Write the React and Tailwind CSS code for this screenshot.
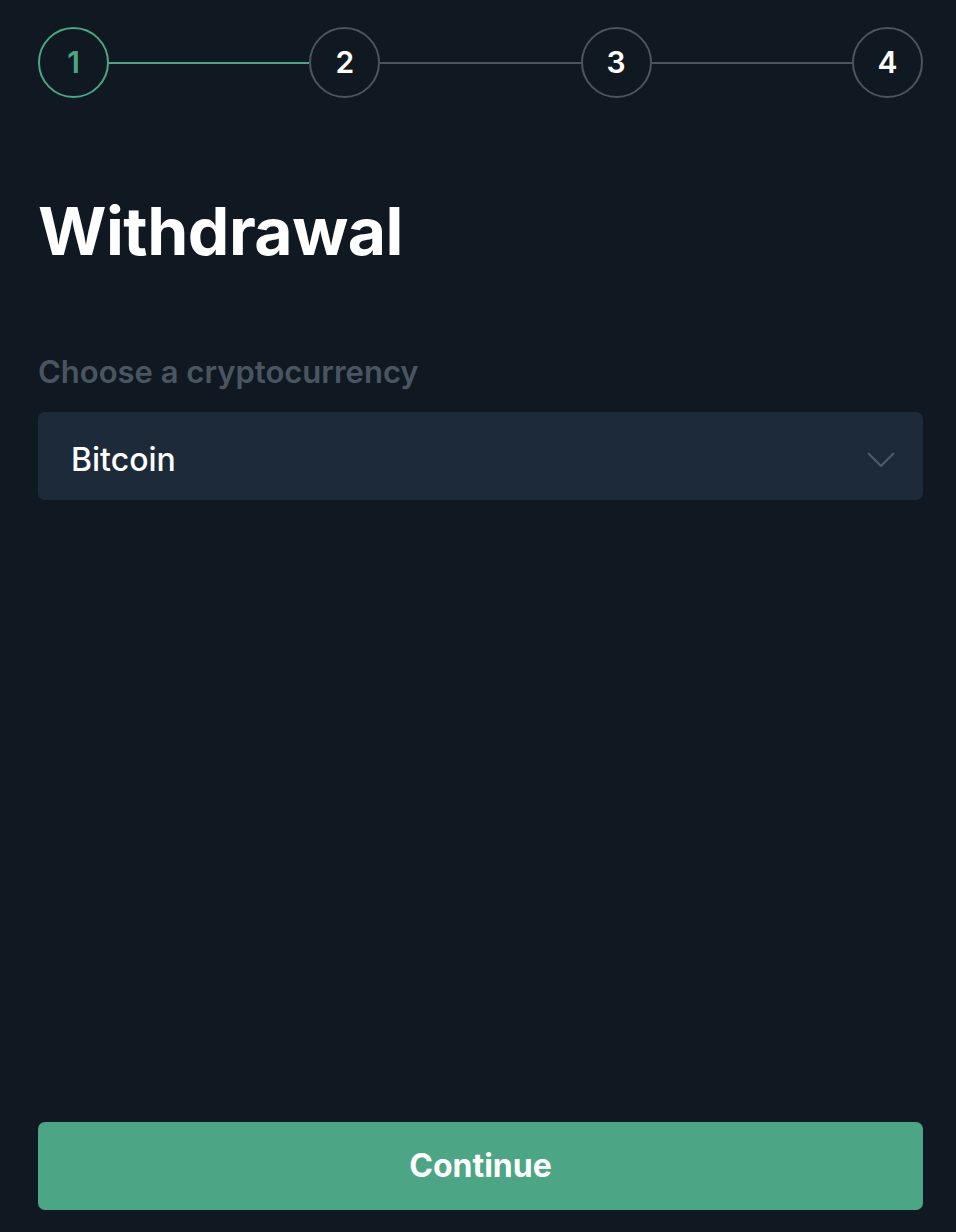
import React from "react";

function Step({ n, active }) {
  return (
    <div
      className={`flex h-[71px] w-[71px] shrink-0 items-center justify-center rounded-full border-[2px] text-[30px] font-semibold ${
        active ? "border-[#4ca584] text-[#4ca584]" : "border-[#4b5560] text-white"
      }`}
    >
      {n}
    </div>
  );
}

export default function App() {
  return (
    <div
      className="flex h-[1232px] w-full flex-col bg-[#101921] pl-[38px] pr-[33px]"
      style={{ fontFamily: "Inter, 'Liberation Sans', sans-serif" }}
    >
      <div className="mt-[27px] flex items-center">
        <Step n="1" active />
        <div className="h-[2px] flex-1 bg-[#4ca584]" />
        <Step n="2" />
        <div className="h-[2px] flex-1 bg-[#4b5560]" />
        <Step n="3" />
        <div className="h-[2px] flex-1 bg-[#4b5560]" />
        <Step n="4" />
      </div>

      <h1 className="mt-[93px] text-[66px] font-bold leading-[80px] tracking-[-0.5px] text-white">
        Withdrawal
      </h1>

      <div className="mt-[83px] text-[31px] font-semibold leading-[36px] text-[#4a5562]">
        Choose a cryptocurrency
      </div>

      <div className="mt-[22px] flex h-[88px] items-center justify-between rounded-[7px] bg-[#1d2a39] pl-[33px] pr-[28px] pt-[8px]">
        <span className="text-[32px] font-medium text-white">Bitcoin</span>
        <svg width="28" height="16" viewBox="0 0 28 16" fill="none">
          <path d="M1.5 1.5 L14 14 L26.5 1.5" stroke="#4f5c6b" strokeWidth="2" strokeLinecap="round" strokeLinejoin="round" />
        </svg>
      </div>

      <div className="flex-1" />

      <button className="mb-[22px] flex h-[88px] w-full items-center justify-center rounded-[7px] bg-[#4ca584] text-[32px] font-bold text-white">
        Continue
      </button>
    </div>
  );
}
